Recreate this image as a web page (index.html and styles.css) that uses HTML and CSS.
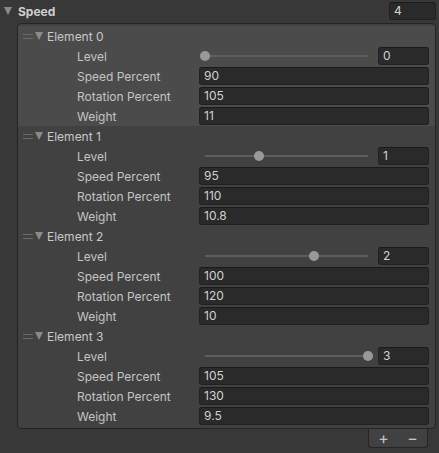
FILE: index.html
```html
<!DOCTYPE html>
<html lang="en">

<head>
    <meta charset="UTF-8">
    <meta name="viewport" content="width=device-width, initial-scale=1.0">
    <title>Speed</title>
    <link rel="stylesheet" href="styles.css">
</head>

<body>
    <div class="inspector">
        <div class="prop-header">
            <span class="foldout"></span>
            <span class="prop-title">Speed</span>
            <div class="field count-field">4</div>
        </div>

        <div class="list-box">
            <div class="element selected">
                <div class="element-header">
                    <span class="handle"></span>
                    <span class="foldout small"></span>
                    <span>Element 0</span>
                </div>
                <div class="row">
                    <span class="label">Level</span>
                    <div class="slider">
                        <div class="track"><span class="thumb" style="left: 0%;"></span></div>
                        <div class="field slider-value">0</div>
                    </div>
                </div>
                <div class="row"><span class="label">Speed Percent</span><div class="field">90</div></div>
                <div class="row"><span class="label">Rotation Percent</span><div class="field">105</div></div>
                <div class="row"><span class="label">Weight</span><div class="field">11</div></div>
            </div>

            <div class="element">
                <div class="element-header">
                    <span class="handle"></span>
                    <span class="foldout small"></span>
                    <span>Element 1</span>
                </div>
                <div class="row">
                    <span class="label">Level</span>
                    <div class="slider">
                        <div class="track"><span class="thumb" style="left: 33.33%;"></span></div>
                        <div class="field slider-value">1</div>
                    </div>
                </div>
                <div class="row"><span class="label">Speed Percent</span><div class="field">95</div></div>
                <div class="row"><span class="label">Rotation Percent</span><div class="field">110</div></div>
                <div class="row"><span class="label">Weight</span><div class="field">10.8</div></div>
            </div>

            <div class="element">
                <div class="element-header">
                    <span class="handle"></span>
                    <span class="foldout small"></span>
                    <span>Element 2</span>
                </div>
                <div class="row">
                    <span class="label">Level</span>
                    <div class="slider">
                        <div class="track"><span class="thumb" style="left: 66.67%;"></span></div>
                        <div class="field slider-value">2</div>
                    </div>
                </div>
                <div class="row"><span class="label">Speed Percent</span><div class="field">100</div></div>
                <div class="row"><span class="label">Rotation Percent</span><div class="field">120</div></div>
                <div class="row"><span class="label">Weight</span><div class="field">10</div></div>
            </div>

            <div class="element">
                <div class="element-header">
                    <span class="handle"></span>
                    <span class="foldout small"></span>
                    <span>Element 3</span>
                </div>
                <div class="row">
                    <span class="label">Level</span>
                    <div class="slider">
                        <div class="track"><span class="thumb" style="left: 100%;"></span></div>
                        <div class="field slider-value">3</div>
                    </div>
                </div>
                <div class="row"><span class="label">Speed Percent</span><div class="field">105</div></div>
                <div class="row"><span class="label">Rotation Percent</span><div class="field">130</div></div>
                <div class="row"><span class="label">Weight</span><div class="field">9.5</div></div>
            </div>
        </div>

        <div class="list-footer">
            <span class="footer-btn">+</span>
            <span class="footer-btn">&minus;</span>
        </div>
    </div>
</body>

</html>
```

FILE: styles.css
```css
body,
html {
    margin: 0;
    padding: 0;
    height: 100%;
    overflow: hidden;
    background-color: #383838;
    font-family: Inter, "Noto Sans", sans-serif;
    font-size: 12px;
    color: #c4c4c4;
}

.inspector {
    padding-top: 2px;
}

/* top property line */
.prop-header {
    display: flex;
    align-items: center;
    height: 18px;
    padding: 0 3px 0 4px;
    margin-bottom: 3px;
}

.foldout {
    width: 0;
    height: 0;
    border-left: 4.5px solid transparent;
    border-right: 4.5px solid transparent;
    border-top: 8px solid #8a8a8a;
    margin-right: 6px;
}

.prop-title {
    font-weight: bold;
    color: #cfcfcf;
}

.field {
    flex: 1;
    height: 16px;
    line-height: 16px;
    padding-left: 4px;
    background-color: #2a2a2a;
    border: 1px solid #212121;
    border-top-color: #1a1a1a;
    border-radius: 3px;
    color: #d2d2d2;
    box-sizing: content-box;
}

.count-field {
    flex: none;
    width: 41px;
    margin-left: auto;
}

/* reorderable list */
.list-box {
    margin-left: 17px;
    margin-right: 3px;
    background-color: #414141;
    border: 1px solid #242424;
    border-radius: 4px;
    padding: 2px 0 2px;
}

.element {
    padding-right: 6px;
}

.element.selected {
    background-color: #4b4b4b;
}

.element-header {
    display: flex;
    align-items: center;
    height: 20px;
    padding-left: 5px;
    color: #c8c8c8;
}

.handle {
    width: 10px;
    height: 3px;
    border-top: 1px solid #6a6a6a;
    border-bottom: 1px solid #6a6a6a;
    margin-right: 2px;
}

.foldout.small {
    border-left-width: 4px;
    border-right-width: 4px;
    border-top-width: 8px;
    margin-right: 4px;
}

.row {
    display: flex;
    align-items: center;
    height: 20px;
}

.label {
    width: 122px;
    padding-left: 59px;
    flex: none;
}

.slider {
    flex: 1;
    display: flex;
    align-items: center;
}

.track {
    position: relative;
    flex: 1;
    height: 2px;
    margin: 0 10px 0 6px;
    background-color: #5e5e5e;
}

.thumb {
    position: absolute;
    top: 50%;
    width: 10px;
    height: 10px;
    border-radius: 50%;
    background-color: #999999;
    transform: translate(-50%, -50%);
}

.slider-value {
    flex: none;
    width: 45px;
}

.list-footer {
    display: flex;
    justify-content: space-around;
    align-items: center;
    width: 58px;
    height: 18px;
    margin-left: auto;
    margin-right: 11px;
    background-color: #414141;
    border: 1px solid #242424;
    border-top: none;
    border-radius: 0 0 4px 4px;
    color: #c4c4c4;
    font-size: 16px;
}

.footer-btn {
    line-height: 18px;
}
```
